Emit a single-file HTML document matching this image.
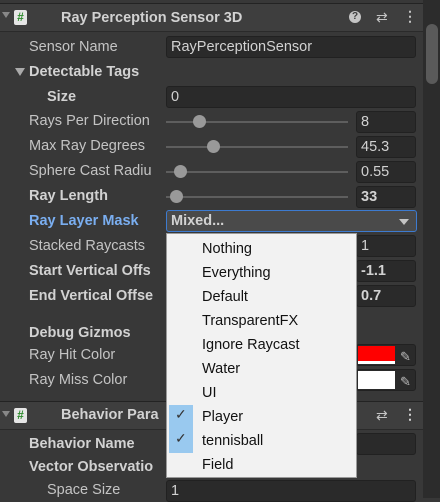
<!DOCTYPE html><html><head><style>
body{margin:0;width:440px;height:498px;background:#383838;overflow:hidden;position:relative;font-family:"Liberation Sans",sans-serif;font-size:14.5px;color:#c4c4c4}
.a{position:absolute}
.lbl{position:absolute;left:29px;white-space:nowrap;line-height:20px}
.b{font-weight:bold;color:#d2d2d2}
.f{position:absolute;background:#2a2a2a;border:1px solid #212121;border-radius:3px;height:20px;line-height:21px;color:#d2d2d2;padding-left:4px;box-sizing:border-box;height:22px}
.tr{position:absolute;left:166px;width:182px;height:2px;background:#5e5e5e}
.th{position:absolute;width:13px;height:13px;border-radius:50%;background:#999}
.hd{position:absolute;left:0;width:423px;height:27px;background:#3e3e3e;border-top:1px solid #232323;border-bottom:1px solid #2a2a2a}
.ic{position:absolute;left:14px;width:13px;height:15px;background:#e6e6e6;border-radius:2px;color:#2c8a2c;font-size:12px;font-weight:bold;text-align:center;line-height:15px}
.dd{position:absolute;left:166px;top:233px;width:191px;height:245px;background:#f2f2f2;border:1px solid #9a9a9a;box-sizing:border-box}
.it{position:absolute;left:35px;color:#111;font-size:14.5px;line-height:20px}
</style></head><body>
<div class="hd" style="top:3px"></div>
<div class="a" style="left:2px;top:12px;width:0;height:0;border-left:4px solid transparent;border-right:4px solid transparent;border-top:6px solid #888"></div>
<div class="ic" style="top:10px">#</div>
<div class="a b" style="left:61px;top:8px;font-size:14.5px;line-height:20px">Ray Perception Sensor 3D</div>
<div class="a" style="left:349px;top:11px;width:12px;height:12px;border-radius:50%;background:#c4c4c4;color:#3e3e3e;font-size:10px;font-weight:bold;text-align:center;line-height:12px">?</div>
<div class="a" style="left:376px;top:9px;color:#c4c4c4;font-size:14px">⇄</div>
<div class="a" style="left:403px;top:8px;color:#c4c4c4;font-size:14px;font-weight:bold">⋮</div>
<div class="a" style="left:423px;top:0;width:17px;height:498px;background:#2c2c2c"></div>
<div class="a" style="left:426px;top:24px;width:12px;height:60px;background:#5a5a5a;border-radius:6px"></div>

<div class="lbl" style="top:37px">Sensor Name</div><div class="f" style="left:166px;top:36px;width:250px">RayPerceptionSensor</div>
<div class="a" style="left:15px;top:68px;width:0;height:0;border-left:5px solid transparent;border-right:5px solid transparent;border-top:8px solid #aaa"></div>
<div class="lbl b" style="top:62px">Detectable Tags</div>
<div class="lbl b" style="top:87px;left:47px">Size</div><div class="f" style="left:166px;top:86px;width:250px">0</div>
<div class="lbl" style="top:111px">Rays Per Direction</div><div class="tr" style="top:121px"></div><div class="th" style="left:193px;top:115px"></div><div class="f" style="left:356px;top:111px;width:60px">8</div>
<div class="lbl" style="top:136px">Max Ray Degrees</div><div class="tr" style="top:146px"></div><div class="th" style="left:207px;top:140px"></div><div class="f" style="left:356px;top:136px;width:60px">45.3</div>
<div class="lbl" style="top:161px">Sphere Cast Radiu</div><div class="tr" style="top:171px"></div><div class="th" style="left:174px;top:165px"></div><div class="f" style="left:356px;top:161px;width:60px">0.55</div>
<div class="lbl b" style="top:186px">Ray Length</div><div class="tr" style="top:196px"></div><div class="th" style="left:170px;top:190px"></div><div class="f b" style="left:356px;top:186px;width:60px">33</div>
<div class="lbl b" style="top:211px;color:#7aaef0">Ray Layer Mask</div>
<div class="f b" style="left:166px;top:210px;width:251px;background:#4a4a4a;border-color:#3d7bd0">Mixed...</div>
<div class="a" style="left:399px;top:219px;border-left:5px solid transparent;border-right:5px solid transparent;border-top:6px solid #c4c4c4"></div>
<div class="lbl" style="top:236px">Stacked Raycasts</div><div class="f" style="left:356px;top:235px;width:60px">1</div>
<div class="lbl b" style="top:261px">Start Vertical Offs</div><div class="f b" style="left:356px;top:260px;width:60px">-1.1</div>
<div class="lbl b" style="top:286px">End Vertical Offse</div><div class="f b" style="left:356px;top:285px;width:60px">0.7</div>
<div class="lbl b" style="top:323px">Debug Gizmos</div>
<div class="lbl" style="top:345px">Ray Hit Color</div>
<div class="f" style="left:356px;top:344px;width:60px;padding:0"><div class="a" style="left:1px;top:1px;width:37px;height:15px;background:#f00"></div><div class="a" style="left:1px;top:16px;width:37px;height:3px;background:#fff"></div><div class="a" style="left:43px;top:1px;color:#bbb;font-size:13px">✎</div></div>
<div class="lbl" style="top:370px">Ray Miss Color</div>
<div class="f" style="left:356px;top:369px;width:60px;padding:0"><div class="a" style="left:1px;top:1px;width:37px;height:18px;background:#fff"></div><div class="a" style="left:43px;top:1px;color:#bbb;font-size:13px">✎</div></div>
<div class="hd" style="top:401px"></div>
<div class="a" style="left:2px;top:411px;border-left:4px solid transparent;border-right:4px solid transparent;border-top:6px solid #888"></div>
<div class="ic" style="top:408px">#</div>
<div class="a b" style="left:61px;top:405px;line-height:20px">Behavior Para</div>
<div class="a" style="left:376px;top:407px;font-size:14px">⇄</div>
<div class="a b" style="left:403px;top:406px;font-size:14px">⋮</div>
<div class="lbl b" style="top:434px">Behavior Name</div><div class="f" style="left:356px;top:433px;width:60px"></div>
<div class="lbl b" style="top:457px">Vector Observatio</div>
<div class="lbl" style="top:480px;left:47px">Space Size</div><div class="f" style="left:166px;top:480px;width:250px">1</div>

<div class="dd">
<div class="a" style="left:2px;top:171px;width:24px;height:48px;background:#99c9ef"></div>
<div class="a" style="left:8px;top:172px;color:#333;font-size:14px">✓</div>
<div class="a" style="left:8px;top:196px;color:#333;font-size:14px">✓</div>
<div class="it" style="top:5px">Nothing</div>
<div class="it" style="top:29px">Everything</div>
<div class="it" style="top:53px">Default</div>
<div class="it" style="top:77px">TransparentFX</div>
<div class="it" style="top:101px">Ignore Raycast</div>
<div class="it" style="top:125px">Water</div>
<div class="it" style="top:149px">UI</div>
<div class="it" style="top:173px">Player</div>
<div class="it" style="top:197px">tennisball</div>
<div class="it" style="top:221px">Field</div>
</div>
</body></html>
